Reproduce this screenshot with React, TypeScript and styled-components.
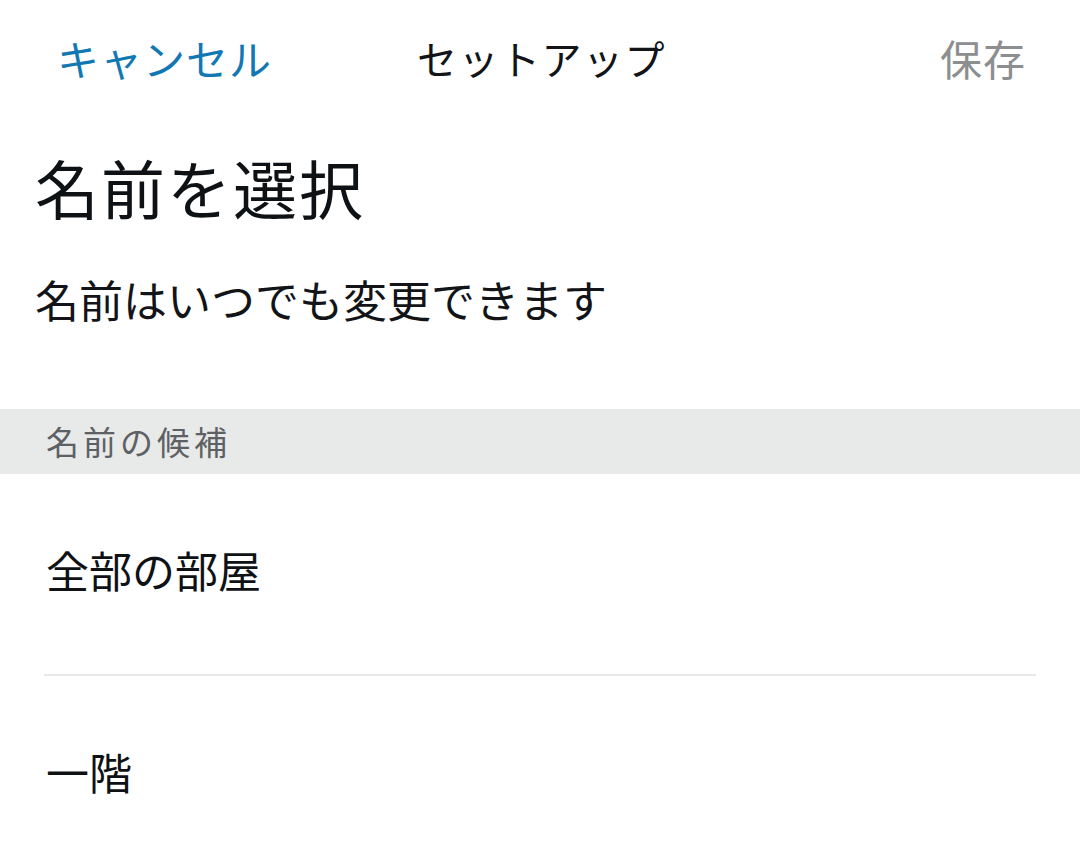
import React from "react";
import styled, { createGlobalStyle } from "styled-components";

const Global = createGlobalStyle`
  html, body { margin: 0; padding: 0; background: #ffffff; }
  body { font-family: "Noto Sans CJK JP", "Noto Sans", sans-serif; }
  * { box-sizing: border-box; }
`;

const Page = styled.div`
  width: 1080px;
  height: 863px;
  overflow: hidden;
  background: #ffffff;
  display: flex;
  flex-direction: column;

  & > * {
    flex-shrink: 0;
  }
`;

const Header = styled.header`
  height: 116px;
  display: grid;
  grid-template-columns: 1fr auto 1fr;
  align-items: center;
  padding: 0 54px 0 57px;
`;

const HeaderButton = styled.span<{ $tone: "primary" | "disabled"; $align: "start" | "end" }>`
  font-size: 42px;
  letter-spacing: 1px;
  line-height: 1.2;
  justify-self: ${(p) => p.$align};
  color: ${(p) => (p.$tone === "primary" ? "#1278b3" : "#8c8e90")};
`;

const HeaderTitle = styled.span`
  font-size: 40px;
  letter-spacing: 1.5px;
  line-height: 1.2;
  color: #121417;
`;

const Title = styled.h1`
  margin: 32px 0 0 35px;
  font-size: 64px;
  font-weight: 400;
  letter-spacing: 2px;
  line-height: 1.2;
  color: #0f1215;
`;

const Subtitle = styled.p`
  margin: 46px 0 0 35px;
  font-size: 44px;
  line-height: 1.3;
  color: #121417;
`;

const SectionBand = styled.div`
  margin-top: 81px;
  height: 65px;
  background: #e8e9e9;
  display: flex;
  align-items: center;
  padding-left: 46px;
`;

const SectionLabel = styled.span`
  font-size: 33px;
  letter-spacing: 4px;
  line-height: 1.2;
  color: #5e6164;
`;

const Row = styled.div`
  height: 200px;
  display: flex;
  align-items: center;
  padding: 0 0 9px 46px;
`;

const RowText = styled.span`
  font-size: 43px;
  line-height: 1.2;
  color: #0f1215;
`;

const Divider = styled.div`
  height: 2px;
  margin: 0 44px;
  background: #e6e7e7;
`;

const suggestions = ["全部の部屋", "一階"];

export default function App() {
  return (
    <>
      <Global />
      <Page>
        <Header>
          <HeaderButton $tone="primary" $align="start">キャンセル</HeaderButton>
          <HeaderTitle>セットアップ</HeaderTitle>
          <HeaderButton $tone="disabled" $align="end">保存</HeaderButton>
        </Header>
        <Title>名前を選択</Title>
        <Subtitle>名前はいつでも変更できます</Subtitle>
        <SectionBand>
          <SectionLabel>名前の候補</SectionLabel>
        </SectionBand>
        {suggestions.map((s, i) => (
          <React.Fragment key={s}>
            {i > 0 && <Divider />}
            <Row>
              <RowText>{s}</RowText>
            </Row>
          </React.Fragment>
        ))}
      </Page>
    </>
  );
}
